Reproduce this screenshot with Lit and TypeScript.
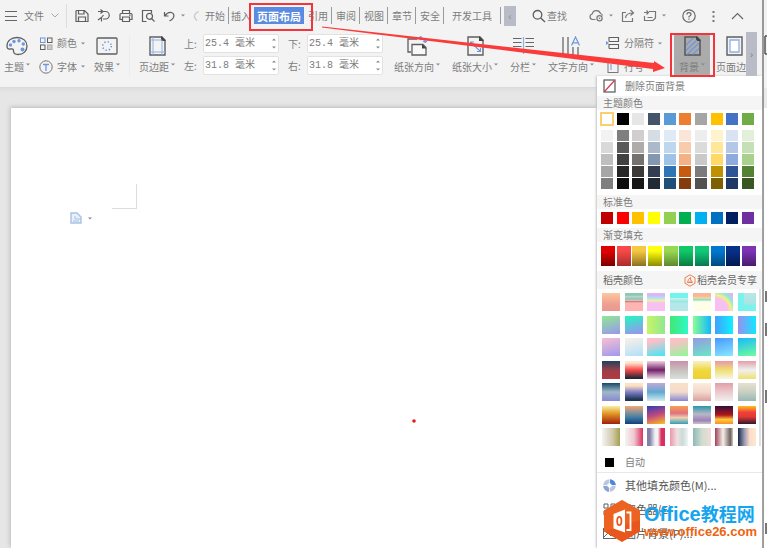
import { LitElement, html, css, svg, nothing } from "lit";
import { customElement, property } from "lit/decorators.js";
import { styleMap } from "lit/directives/style-map.js";
import { classMap } from "lit/directives/class-map.js";

const D = "#5f5f5f";
const B = "#6d97dc";

const icons: Record<string, [number, number, unknown]> = {
  menu: [12, 12, svg`<path d="M0 1.500H12M0 6.500H12M0 10.500H12" stroke="#666" stroke-width="1.1"/>`],
  chevron: [8, 5, svg`<path d="M.5.5L4 4 7.5.5" stroke="#aaa"/>`],
  save: [14, 14, svg`<path d="M1 12.5V2.5Q1 1.5 2 1.5H9.5L13 5V12.5Z M3.5 1.5V5H9V1.5 M3.5 12.5V8H10.5V12.5" stroke="${D}" stroke-width="1.2"/>`],
  redo: [14, 14, svg`<path d="M1 2.5H8.5A3.5 3.5 0 0 1 8.500 10H6M3.500 0.500L6 2.500 3.500 4.500M4.500 12.500V8.500L1 11M4.500 8.500L6.500 6" stroke="${D}" stroke-width="1.2"/>`],
  print: [14, 14, svg`<path d="M3.500 4V1.500H10.500V4M3.500 10.500H1V5.500Q1 4.500 2 4.500H12Q13 4.500 13 5.500V10.500H10.500M3.500 8H10.500V12.500H3.500ZM10 6.200H11.500" stroke="${D}" stroke-width="1.2"/>`],
  preview: [14, 14, svg`<path d="M5.500 12.500H1.500V1.500H10.500V4M10.500 9.500L13.500 12.500" stroke="${D}" stroke-width="1.2"/><circle cx="8.500" cy="7.300" r="3" stroke="${D}" stroke-width="1.2"/>`],
  undo: [13, 14, svg`<path d="M1.500 3V7H5.500M1.800 6.800Q5 2.500 8.500 3.500 12 5 10.500 8.500 9.500 10.500 6.500 12" stroke="${D}" stroke-width="1.2"/>`],
  curve: [6, 14, svg`<path d="M5.500 2.500Q-2 6.500 4 11.500" stroke="#c8c8c8" stroke-width="1.200"/>`],
  down: [4, 3, svg`<path d="M0 .5H4L2 2.500Z" fill="#888"/>`],
  search: [14, 14, svg`<circle cx="5.500" cy="5.800" r="4.300" stroke="${D}" stroke-width="1.300"/><path d="M8.700 9L13 13" stroke="${D}" stroke-width="1.400"/>`],
  cloud: [15, 13, svg`<path d="M6.500 10.500H3.500A2.800 2.800 0 0 1 3.200 5 4.300 4.300 0 0 1 11.500 4.500 3 3 0 0 1 13.500 6.500" stroke="#777" stroke-width="1.200"/><circle cx="10.500" cy="9.300" r="2.600" stroke="#777" stroke-width="1.200"/><circle cx="10.500" cy="9.300" r=".8" fill="#777"/>`],
  share: [14, 14, svg`<path d="M5 3.500H1.500V12.500H11.500V9M4.500 9Q5 4 12 4M9.500 1L12.500 4 9.500 6.500" stroke="#777" stroke-width="1.200"/>`],
  skin: [14, 14, svg`<path d="M6 2.500H12.500V9L10 11.500H1.500V7M1 3.500H5M3.500 1.500L5.500 3.500 3.500 5.500M4.500 8.500H9.500" stroke="#777" stroke-width="1.200"/>`],
  help: [14, 14, svg`<circle cx="7" cy="7" r="6.200" stroke="#666" stroke-width="1.200"/><path d="M5 5.500Q5 3.700 7 3.700T9 5.500Q9 6.500 7 7.500V8.600M7 9.600V10.800" stroke="#666" stroke-width="1.200"/>`],
  dots: [3, 14, svg`<path d="M.5 2H2.500V4H.5ZM.5 6.500H2.500V8.500H.5ZM.5 11H2.500V13H.5Z" fill="#777"/>`],
  up: [13, 8, svg`<path d="M1 7L6.500 1.500 12 7" stroke="#666" stroke-width="1.200"/>`],
  palette: [22, 20, svg`<path d="M11 1.500C5 1.500 1 5 1 10Q1 13.500 4 13Q8 12 7.500 15.500Q8 18.500 12 18.500C17.500 18.500 21 15 21 10S17 1.500 11 1.500Z" stroke="${D}" stroke-width="1.300"/><g fill="${B}"><circle cx="4.500" cy="9" r="1.700"/><circle cx="8" cy="5.500" r="1.700"/><circle cx="13" cy="4.800" r="1.700"/><circle cx="17.300" cy="8" r="1.700"/><circle cx="16.500" cy="13.500" r="2"/></g>`],
  colors: [13, 13, svg`<rect x="1" y="1" width="4.500" height="4.500" stroke="${B}"/><rect x="8" y="1" width="4.500" height="4.500" stroke="${D}"/><rect x="1" y="8" width="4.500" height="4.500" stroke="${D}"/><rect x="8" y="8" width="4.500" height="4.500" fill="#ccc" stroke="#aaa"/>`],
  font: [14, 14, svg`<circle cx="7" cy="7" r="6.200" stroke="#777"/><path d="M4 4.500H10M7 4.500V11" stroke="${B}" stroke-width="1.300"/>`],
  effect: [22, 20, svg`<rect x="1" y="2" width="20" height="16" rx="1" stroke="${D}" stroke-width="1.300"/><circle cx="11" cy="10" r="4.300" stroke="${B}" stroke-width="1.600" stroke-dasharray="1.300 2.100"/>`],
  margins: [17, 20, svg`<path d="M1 1H13L16 4V19H1Z" stroke="${D}" stroke-width="1.400"/><path d="M12 0L17 5H12Z" fill="#444"/><path d="M4 1V19M13 4V19M1 4H13M1 16H16" stroke="#8fb0e8"/>`],
  orient: [22, 20, svg`<path d="M5 16H2V3H11" stroke="${D}" stroke-width="1.300"/><path d="M6 8.500H17L20 11.500V19H6Z" fill="#f8f8f8" stroke="${D}" stroke-width="1.300"/><path d="M16 8L20.500 12.500H16Z" fill="#444"/><path d="M13 2Q18 1 19.500 6M13 2L15.500 0M13 2L15.500 4M19.500 6.500L17 5M19.500 6.500L21.500 4" stroke="${B}" stroke-width="1.200"/>`],
  size: [17, 20, svg`<path d="M1 1H13L16 4V19H1Z" stroke="${D}" stroke-width="1.400"/><path d="M12 0L17 5H12Z" fill="#444"/><path d="M3.500 6L13.500 15.500M3.500 9.500V6H7M13.500 12V15.500H10" stroke="${B}" stroke-width="1.100"/>`],
  columns: [21, 20, svg`<path d="M0 2.500H8.500M0 6.500H8.500M0 10.500H8.500M0 14.500H8.500M12.500 2.500H21M12.500 6.500H21M12.500 10.500H21M12.500 14.500H21" stroke="#666" stroke-width="1.200"/><path d="M10.500 1V18" stroke="#8fb0e8" stroke-width="1.200"/>`],
  textdir: [20, 20, svg`<path d="M2 1V19M7 1V19M12 11V19M17 11V19" stroke="${D}" stroke-width="1.200"/><path d="M10.500 9.500L14.500 1 18.500 9.500M12 6.800H17" stroke="${B}" stroke-width="1.200"/>`],
  breaks: [14, 14, svg`<path d="M3 5.500V1.500H12.500V5.500H3M3 12.500V8.500H12.500V12.500H3" stroke="${D}" stroke-width="1.100"/><path d="M0 5L3 7 0 9Z" fill="${B}"/>`],
  lines: [13, 14, svg`<rect x="1.500" y="1.500" width="10" height="11" stroke="#777"/><path d="M4.500 4V10" stroke="${B}"/>`],
  background: [17, 20, svg`<path d="M1 1H13L16 4V19H1Z" stroke="#555" stroke-width="1.500"/><path d="M12 0L17 5H12Z" fill="#444"/><path d="M2 9L9 2M2 14.500L13 4M3 18.500L15 7M8.500 18.500L15 12.500" stroke="${B}" stroke-width="1.200"/>`],
  border: [17, 20, svg`<path d="M1 1H16V19H1Z" stroke="${D}" stroke-width="1.400"/><path d="M4 4H13V16H4Z" fill="#fff" stroke="#8fb0e8" stroke-width="1.300"/>`],
  none: [13, 14, svg`<rect x="1" y="1" width="11" height="12" fill="#fff" stroke="#555" stroke-width="1.200"/><path d="M1.500 12.500L11.500 1.500" stroke="#d33b4b" stroke-width="1.200"/>`],
  badge: [12, 13, svg`<path d="M6 .8L11 3.700V9.300L6 12.200 1 9.300V3.700Z" stroke="#f07c4c"/><path d="M3.500 8.500Q4 5 6.500 3.500 6 6 8.500 8.500ZM5 8.500L7 6.500" stroke="#f07c4c"/>`],
  auto: [13, 13, svg`<rect x="2" y="2" width="9" height="9" fill="#000"/>`],
  wheel: [13, 13, svg`<circle cx="6.500" cy="6.500" r="4.300" stroke="#b9c6dc" stroke-width="4"/><path d="M6.500 2.200A4.300 4.300 0 0 1 10.800 6.500" stroke="#4d86e0" stroke-width="4"/><path d="M2.200 6.500A4.300 4.300 0 0 0 6.500 10.800" stroke="#8aa6cf" stroke-width="4"/><path d="M6.500 0V13M0 6.500H13" stroke="#fff" stroke-width=".8"/>`],
  picker: [13, 13, svg`<path d="M1 1H5V5H1ZM8 1H12V5H8ZM1 8H5V12H1Z" stroke="${D}"/>`],
  picture: [13, 13, svg`<rect x=".5" y="1.500" width="12" height="10" stroke="#666"/><path d="M1 10L5 6 8 9 10 7 12 9" stroke="#666"/>`],
  paste: [12, 12, svg`<path d="M1 1H7L11 5V11H1Z" fill="#e8f0fb" stroke="#a9c1e4" stroke-width="1.400"/><path d="M5 4V7H11M3 9H9" stroke="#a9c1e4"/>`],
  office: [36, 42, svg`<path d="M18 0L36 10.500V31.500L18 42 0 31.500V10.500Z" fill="#e8561c"/><path d="M18 0L36 10.500V20L0 31.500V10.500Z" fill="#ee6a25" opacity=".6"/><path d="M9.500 14L21 9.500V32.500L9.500 28.500Z" fill="#fff"/><path d="M22.500 12.500H26.500V30H22.500" stroke="#fff" stroke-width="1.800"/><ellipse cx="15.300" cy="21" rx="2.100" ry="4.200" stroke="#e8561c" stroke-width="1.800"/>`],
};

const icon = (name: string) => {
  const [w, h, body] = icons[name];
  return html`<svg width=${w} height=${h} viewBox="0 0 ${w} ${h}" fill="none" aria-hidden="true">${body}</svg>`;
};

const theme = ["#fff", "#000", "#e7e6e6", "#44546a", "#5b9bd5", "#ed7d31", "#a5a5a5", "#ffc000", "#4472c4", "#70ad47"];
const tints = [
  "#f2f2f2", "#7f7f7f", "#d0cece", "#d6dce5", "#deebf7", "#fbe5d6", "#ededed", "#fff2cc", "#dae3f3", "#e2f0d9",
  "#d9d9d9", "#595959", "#afabab", "#adb9ca", "#bdd7ee", "#f8cbad", "#dbdbdb", "#ffe699", "#b4c7e7", "#c5e0b4",
  "#bfbfbf", "#404040", "#767171", "#8497b0", "#9dc3e6", "#f4b183", "#c9c9c9", "#ffd966", "#8faadc", "#a9d18e",
  "#a6a6a6", "#262626", "#3b3838", "#333f50", "#2e75b6", "#c55a11", "#7b7b7b", "#bf9000", "#2f5597", "#548235",
  "#7f7f7f", "#0d0d0d", "#181717", "#222a35", "#1f4e79", "#843c0c", "#525252", "#7f6000", "#203864", "#385723",
];
const standard = ["#c00000", "#f00", "#ffc000", "#ff0", "#92d050", "#00b050", "#00b0f0", "#0070c0", "#002060", "#7030a0"];
const fills = [
  ["#e00000", "#7a0000"], ["#f84848", "#a82c2c"], ["#f6c840", "#8c7020"], ["#ffff10", "#8c8c00"], ["#98d850", "#5c8830"],
  ["#10c868", "#087c40"], ["#10c878", "#087850"], ["#0078d0", "#004a80"], ["#083088", "#041850"], ["#7c34b4", "#481c6c"],
].map(([a, b]) => `linear-gradient(${a} 25%,${b})`);
const docer = [
  "linear-gradient(#fcc8a0,#f0a090 60%,#e89890)",
  "linear-gradient(#8cc8b4 12%,#b8d8cc 20%,#90c0b0 35%,#e8d8d0 40%,#c87878 46%,#ffb4b4 55%)",
  "linear-gradient(#d8b8f8 15%,#a8e8f0 28%,#f0f0a0 42%,#f8c0f0 55%)",
  "linear-gradient(#70f4ec 25%,#d0ecec 30%,#90e8e4 48%,#b4e8e8 55%)",
  "linear-gradient(#f8b898 18%,#f8d898 28%,#80e0d0 38%,#ffffe8 48%)",
  "radial-gradient(circle at 0 100%,#f8c0f0 50%,#f4f080 63%,#90e8e0 76%,#d8b8f0 90%)",
  "linear-gradient(#b8e8e8,#a8e4e4) 100% 0 / 65% 65% no-repeat, linear-gradient(45deg,#70f4ec,#88f0ec)",
  "linear-gradient(165deg,#90e890,#9898f0)", "linear-gradient(165deg,#20f8c0,#a090f0)", "linear-gradient(90deg,#c8f468,#90e890)",
  "linear-gradient(90deg,#40e870,#30f8c8)", "linear-gradient(90deg,#88ff90,#10b8ff)", "linear-gradient(90deg,#40a0ff,#10f0ff)", "linear-gradient(90deg,#9890f0,#10e8ff)",
  "linear-gradient(165deg,#f8c0d0,#a098f0)", "linear-gradient(165deg,#fcf0e8,#b0e0f8)", "linear-gradient(165deg,#fcc0c8 20%,#40e8f8)",
  "linear-gradient(165deg,#fcc0c8 20%,#90f898)", "linear-gradient(165deg,#9898e0,#68e8c8)", "linear-gradient(165deg,#4898ff,#88e8ff)", "linear-gradient(165deg,#18b8ff,#70ff98)",
  "linear-gradient(#204060,#984048 50%,#b83840)", "linear-gradient(#ffe8d0 10%,#f84848 50%,#202838 95%)", "linear-gradient(#f0d0e0,#702068 50%,#f0e0e8)",
  "linear-gradient(#c890a8,#c8c0c0 50%,#d8e0d8)", "linear-gradient(#f8f0c8,#f0d840 50%,#f0d030)", "linear-gradient(#e898a8,#f0e070 50%,#f8f4e8)", "linear-gradient(#e0a0a8,#f0f0f0 50%,#f0e070)",
  "linear-gradient(#184868,#a0b8c8 50%,#8888d0)", "linear-gradient(#ffe0c0 15%,#8080c8 50%,#203858 90%)", "linear-gradient(#c0a8d8,#60a8d0 50%,#d0ecf0)",
  "linear-gradient(#f8e0c8,#f4dccc 50%,#8888d0)", "linear-gradient(#fcecdc,#f4d8cc 50%,#d8a0a0)", "linear-gradient(#e0a0a8,#ecc8cc 50%,#f0f0f0)", "linear-gradient(#e8e0d0,#c8d0c0 50%,#98b8b8)",
  "linear-gradient(#f8f0a0,#e09020 45%,#a02010)", "linear-gradient(#f0a878,#4880a8 60%,#104078)", "linear-gradient(165deg,#2840b0,#c04880 50%,#ffc020)",
  "linear-gradient(#f8a050,#e07080 40%,#f0d0b0 65%,#30a0b8)", "linear-gradient(#2898a8,#b8b8c8 45%,#a080b8 80%,#c8c8c0)", "linear-gradient(#301040,#b01818 50%,#ffc840 75%,#f89020)", "linear-gradient(#ffc020,#f04038 35%,#e03838 60%,#301828)",
  "linear-gradient(90deg,#f4f4f4,#d0c8a8 60%,#a0a050)", "linear-gradient(90deg,#f4f4f4,#f0c8d0 50%,#d83060)", "linear-gradient(90deg,#8080a8 15%,#f0f0f4 45%,#f8f0f0 60%,#d83060 80%)",
  "linear-gradient(90deg,#e898a8,#f0e0e0 40%,#c8dcd8 70%,#f0f4f4)", "linear-gradient(90deg,#90b8b8,#d0dcd0 50%,#f0dcd8)", "linear-gradient(90deg,#a04058,#f4f0e8 45%,#706060 85%,#d0c8c0)", "linear-gradient(90deg,#182848,#9898b0 35%,#fcdcc8 65%,#fce8d0)",
];

const base = css`
  * { box-sizing: border-box; }
  button, input { font: inherit; color: inherit; border: 0; padding: 0; margin: 0; background: none; }
  button { display: inline-flex; align-items: center; flex: none; white-space: nowrap; }
  svg { display: block; flex: none; }
`;

@customElement("tool-button")
class ToolButton extends LitElement {
  @property() icon = "";
  @property() label = "";
  @property({ type: Boolean, reflect: true }) small = false;
  @property({ type: Boolean, reflect: true }) active = false;
  static styles = [base, css`
    :host { display: block; flex: none; }
    .big { flex-direction: column; gap: 4px; }
    .cap { display: flex; gap: 2px; line-height: 14px; }
    .cap svg { margin-top: 3px; }
    .small { gap: 4px; height: 18px; }
    .small svg:first-child { width: 14px; }
    .active { background: #ababab; padding: 2px 5px 1px; margin-top: -2px; }
  `];
  render() {
    return this.small
      ? html`<button class="small">${icon(this.icon)}<span>${this.label}</span>${icon("down")}</button>`
      : html`<button class=${classMap({ big: true, active: this.active })}>${icon(this.icon)}<span class="cap">${this.label}${icon("down")}</span></button>`;
  }
}

@customElement("measure-field")
class MeasureField extends LitElement {
  @property() label = "";
  @property() value = "";
  static styles = [base, css`
    :host { display: block; }
    .row { display: flex; align-items: center; gap: 5px; }
    .label { width: 14px; white-space: nowrap; }
    .box { display: flex; align-items: center; width: 76px; height: 19px; background: #fff; border: 1px solid #e2e2e2; border-radius: 2px; padding: 0 2px 0 1px; }
    .input { flex: 1; min-width: 0; font-family: "Liberation Mono", "Noto Sans CJK SC", monospace; outline: 0; }
    .spin { display: flex; flex-direction: column; gap: 5px; }
    .flip { transform: rotate(180deg); }
  `];
  render() {
    return html`<div class="row">
      <label class="label" for="v">${this.label}:</label>
      <span class="box"><input class="input" id="v" .value=${this.value}>
        <span class="spin"><button class="flip" aria-label="增加">${icon("down")}</button><button aria-label="减少">${icon("down")}</button></span>
      </span></div>`;
  }
}

@customElement("swatch-grid")
class SwatchGrid extends LitElement {
  @property({ attribute: false }) colors: string[] = [];
  @property() kind = "plain";
  @property() label = "";
  static styles = [base, css`
    :host { display: block; }
    .grid { display: grid; justify-content: space-between; }
    .plain { grid-template-columns: repeat(10, 12px); grid-auto-rows: 12px; padding: 3px 8px 4px 4px; }
    .tints { grid-template-columns: repeat(10, 12px); grid-auto-rows: 11px; row-gap: 1px; padding: 1px 8px 6px 4px; }
    .fills { grid-template-columns: repeat(10, 14px); grid-auto-rows: 20px; padding: 4px 6px 5px 4px; }
    .docer { grid-template-columns: repeat(7, 18px); grid-auto-rows: 18px; align-content: space-between; height: 157px; padding: 4px 3px 0 5px; border-right: 2px solid #e2e2e2; }
    .picked { outline: 2px solid #f8cf72; outline-offset: -1px; }
  `];
  render() {
    return html`<div class="grid ${this.kind}" role="group" aria-label=${this.label}>
      ${this.colors.map((c, i) => html`<button class=${classMap({ picked: c === "#fff" })} aria-label="${this.label} ${i + 1}" style=${styleMap({ background: c })}></button>`)}
    </div>`;
  }
}

@customElement("background-menu")
class BackgroundMenu extends LitElement {
  static styles = [base, css`
    :host { display: block; background: #fff; box-shadow: -1px 0 2px #c4c4c4; overflow: hidden; }
    .item { display: flex; gap: 9px; width: 100%; height: 24px; padding-left: 6px; }
    .item svg { width: 13px; }
    .first { height: 20px; }
    .band { margin: 0; font-size: 10px; font-weight: 400; line-height: 14px; height: 14px; padding-left: 6px; background: #f5f5f5; }
    .docer { display: flex; align-items: center; justify-content: space-between; height: 18px; padding-right: 5px; color: #666; }
    .vip { display: flex; align-items: center; gap: 1px; color: #666; text-decoration: none; }
    .scroll { padding-right: 1px; }
    .auto { height: 20px; margin-top: 6px; }
    .rule { border: 0; border-top: 1px solid #e8e8e8; margin: 0; }
    .fill { font-size: 11px; color: #555; }
    .mark { position: absolute; left: 7px; top: 424px; display: flex; gap: 4px; }
    .name { padding-top: 3px; font: bold 20px/21px "Liberation Sans", sans-serif; color: #15a5ee; white-space: nowrap; }
    .cn { font: bold 18px/21px "Noto Sans CJK SC", sans-serif; }
    .site { display: block; font: bold 13px/14px "Liberation Sans", sans-serif; color: #ee6310; text-decoration: none; }
  `];
  render() {
    return html`
      <button class="item first">${icon("none")}删除页面背景</button>
      <h2 class="band">主题颜色</h2>
      <swatch-grid .colors=${theme} label="主题颜色"></swatch-grid>
      <swatch-grid .colors=${tints} kind="tints" label="主题色调"></swatch-grid>
      <h2 class="band">标准色</h2>
      <swatch-grid .colors=${standard} label="标准色"></swatch-grid>
      <h2 class="band">渐变填充</h2>
      <swatch-grid .colors=${fills} kind="fills" label="渐变填充"></swatch-grid>
      <h2 class="band docer">稻壳颜色<a class="vip" href="#">${icon("badge")}稻壳会员专享</a></h2>
      <div class="scroll"><swatch-grid .colors=${docer} kind="docer" label="稻壳颜色"></swatch-grid></div>
      <button class="item auto">${icon("auto")}自动</button>
      <hr class="rule">
      <button class="item fill">${icon("wheel")}其他填充颜色(M)...</button>
      <button class="item fill">${icon("picker")}取色器(E)</button>
      <button class="item fill">${icon("picture")}图片背景(P)...</button>
      <div class="mark">${icon("office")}<div><div class="name">Office<span class="cn">教程网</span></div><a class="site" href="#">www.office26.com</a></div></div>`;
  }
}

@customElement("app-root")
class AppRoot extends LitElement {
  static styles = [base, css`
    :host { display: flex; position: relative; min-height: 100vh; overflow: hidden; color: #7c7c7c; font: 10px/14px "Noto Sans CJK SC", sans-serif; }
    .app { position: relative; flex: 1; min-width: 0; display: flex; flex-direction: column; }
    .bar { display: flex; align-items: center; height: 31px; padding: 0 18px 0 5px; background: #f3f3f3; }
    .group, .tabs, .tools { display: flex; align-items: center; }
    .group { gap: 7px; }
    .tools { gap: 8px; margin-left: 7px; border-left: 1px solid #dcdcdc; padding-left: 8px; height: 24px; }
    .pair { gap: 5px; }
    .tabs { margin-left: 2px; }
    .tab { padding: 0 3px 0 4px; height: 17px; border-right: 1px solid #9a9a9a; }
    .bare { border-right-color: transparent; padding: 0 2px; }
    .wide { padding: 0 8px; }
    .on { background: #5a8be0; color: #fff; font-weight: bold; font-size: 11px; padding: 0 3px; border: 0; }
    .more { background: #b9bcc6; width: 12px; height: 20px; justify-content: center; color: #888; margin: 0 16px 0 3px; }
    .find { gap: 1px; }
    .right { margin-left: auto; gap: 16px; }
    .near { gap: 8px; }
    .ribbon { display: flex; align-items: flex-start; height: 57px; padding: 5px 5px 0 4px; background: #f3f3f3; border-bottom: 1px solid #dadada; }
    .set { display: flex; gap: 9px; flex: none; }
    .stack { display: grid; gap: 5px; margin-top: -2px; align-content: start; }
    .split { width: 1px; height: 40px; background: #ebebeb; }
    .fields { display: grid; grid-template-columns: auto auto; gap: 2px 9px; margin: -2px 11px 0 0; }
    .second { gap: 12px; }
    .clip { flex: 1; min-width: 0; overflow: hidden; padding-left: 6px; }
    .scroll { width: 11px; height: 44px; background: #b9bcc6; justify-content: center; margin-top: -4px; color: #777; }
    .desk { flex: 1; display: flex; background: linear-gradient(#dedede, #e6e6e6 5px); padding: 20px 0 0 11px; }
    .page { flex: 1; background: #fff; box-shadow: -1px -1px 4px #bbb; padding: 76px 59px; }
    .corner { width: 25px; height: 25px; margin-left: 42px; border: solid #dcdcdc; border-width: 0 1px 1px 0; }
    .paste { gap: 6px; margin-top: 3px; }
    .menu { position: absolute; top: 76px; bottom: 0; right: 0; width: 165px; }
    .next { width: 5px; border-left: 2px solid #999; background: linear-gradient(#f3f3f3 88px, #e9e9e9 88px, #e9e9e9 108px, #fff 108px); }
    .notes { position: absolute; left: 0; top: 0; pointer-events: none; }
  `];
  tab(label: string, kind = "") {
    return html`<button class="tab ${kind}">${label}</button>`;
  }
  tool(name: string, label: string, arrow = false) {
    return html`<button class="pair" aria-label=${label}>${icon(name)}${arrow ? icon("down") : nothing}</button>`;
  }
  render() {
    return html`
      <div class="app">
        <header class="bar">
          <button class="group">${icon("menu")}文件${icon("chevron")}</button>
          <div class="tools">
            ${this.tool("save", "保存")}${this.tool("redo", "输出")}${this.tool("print", "打印")}${this.tool("preview", "预览")}${this.tool("undo", "撤销", true)}${this.tool("curve", "恢复")}
          </div>
          <nav class="tabs">
            ${this.tab("开始")}${this.tab("插入", "bare")}${this.tab("页面布局", "on")}${this.tab("引用")}${this.tab("审阅")}${this.tab("视图")}${this.tab("章节")}${this.tab("安全")}${this.tab("开发工具", "wide")}
            <button class="more">‹</button>
          </nav>
          <button class="find">${icon("search")}查找</button>
          <div class="group right">
            <div class="group near">${this.tool("cloud", "云", true)}${this.tool("share", "分享")}${this.tool("skin", "皮肤", true)}</div>
            ${this.tool("help", "帮助")}${this.tool("dots", "更多")}${this.tool("up", "收起")}
          </div>
        </header>
        <div class="ribbon">
          <div class="set">
            <tool-button icon="palette" label="主题"></tool-button>
            <div class="stack"><tool-button small icon="colors" label="颜色"></tool-button><tool-button small icon="font" label="字体"></tool-button></div>
            <tool-button icon="effect" label="效果"></tool-button>
            <span class="split"></span>
            <tool-button icon="margins" label="页边距"></tool-button>
            <div class="fields">
              <measure-field label="上" value="25.4 毫米"></measure-field><measure-field label="下" value="25.4 毫米"></measure-field>
              <measure-field label="左" value="31.8 毫米"></measure-field><measure-field label="右" value="31.8 毫米"></measure-field>
            </div>
          </div>
          <div class="set second">
            <tool-button icon="orient" label="纸张方向"></tool-button>
            <tool-button icon="size" label="纸张大小"></tool-button>
            <tool-button icon="columns" label="分栏"></tool-button>
            <tool-button icon="textdir" label="文字方向"></tool-button>
            <div class="stack"><tool-button small icon="breaks" label="分隔符"></tool-button><tool-button small icon="lines" label="行号"></tool-button></div>
            <tool-button active icon="background" label="背景"></tool-button>
          </div>
          <div class="clip"><tool-button icon="border" label="页面边"></tool-button></div>
          <button class="scroll">›</button>
        </div>
        <main class="desk"><div class="page"><div class="corner"></div><button class="paste" aria-label="粘贴选项">${icon("paste")}${icon("down")}</button></div></main>
        <background-menu class="menu"></background-menu>
      </div>
      <div class="next"></div>
      <svg class="notes" width="767" height="548" fill="none" aria-hidden="true">
        <rect x="250" y="4" width="62" height="26" stroke="#f5333a" stroke-width="2"/>
        <rect x="671" y="34" width="43" height="42" stroke="#f5333a" stroke-width="2"/>
        <path d="M322 26.500L654 63V61L665 68 653 72V69L322 27.500Z" fill="#fb3a3a"/>
        <circle cx="414" cy="421" r="1.800" fill="#e02020"/>
        <path d="M766 291V302M766 323V336M766 390V403M766 523V534" stroke="#777" stroke-width="2"/>
        <path d="M765 36H767M765 54H767M765 36V54" stroke="#555" stroke-width="1.500"/>
      </svg>`;
  }
}
